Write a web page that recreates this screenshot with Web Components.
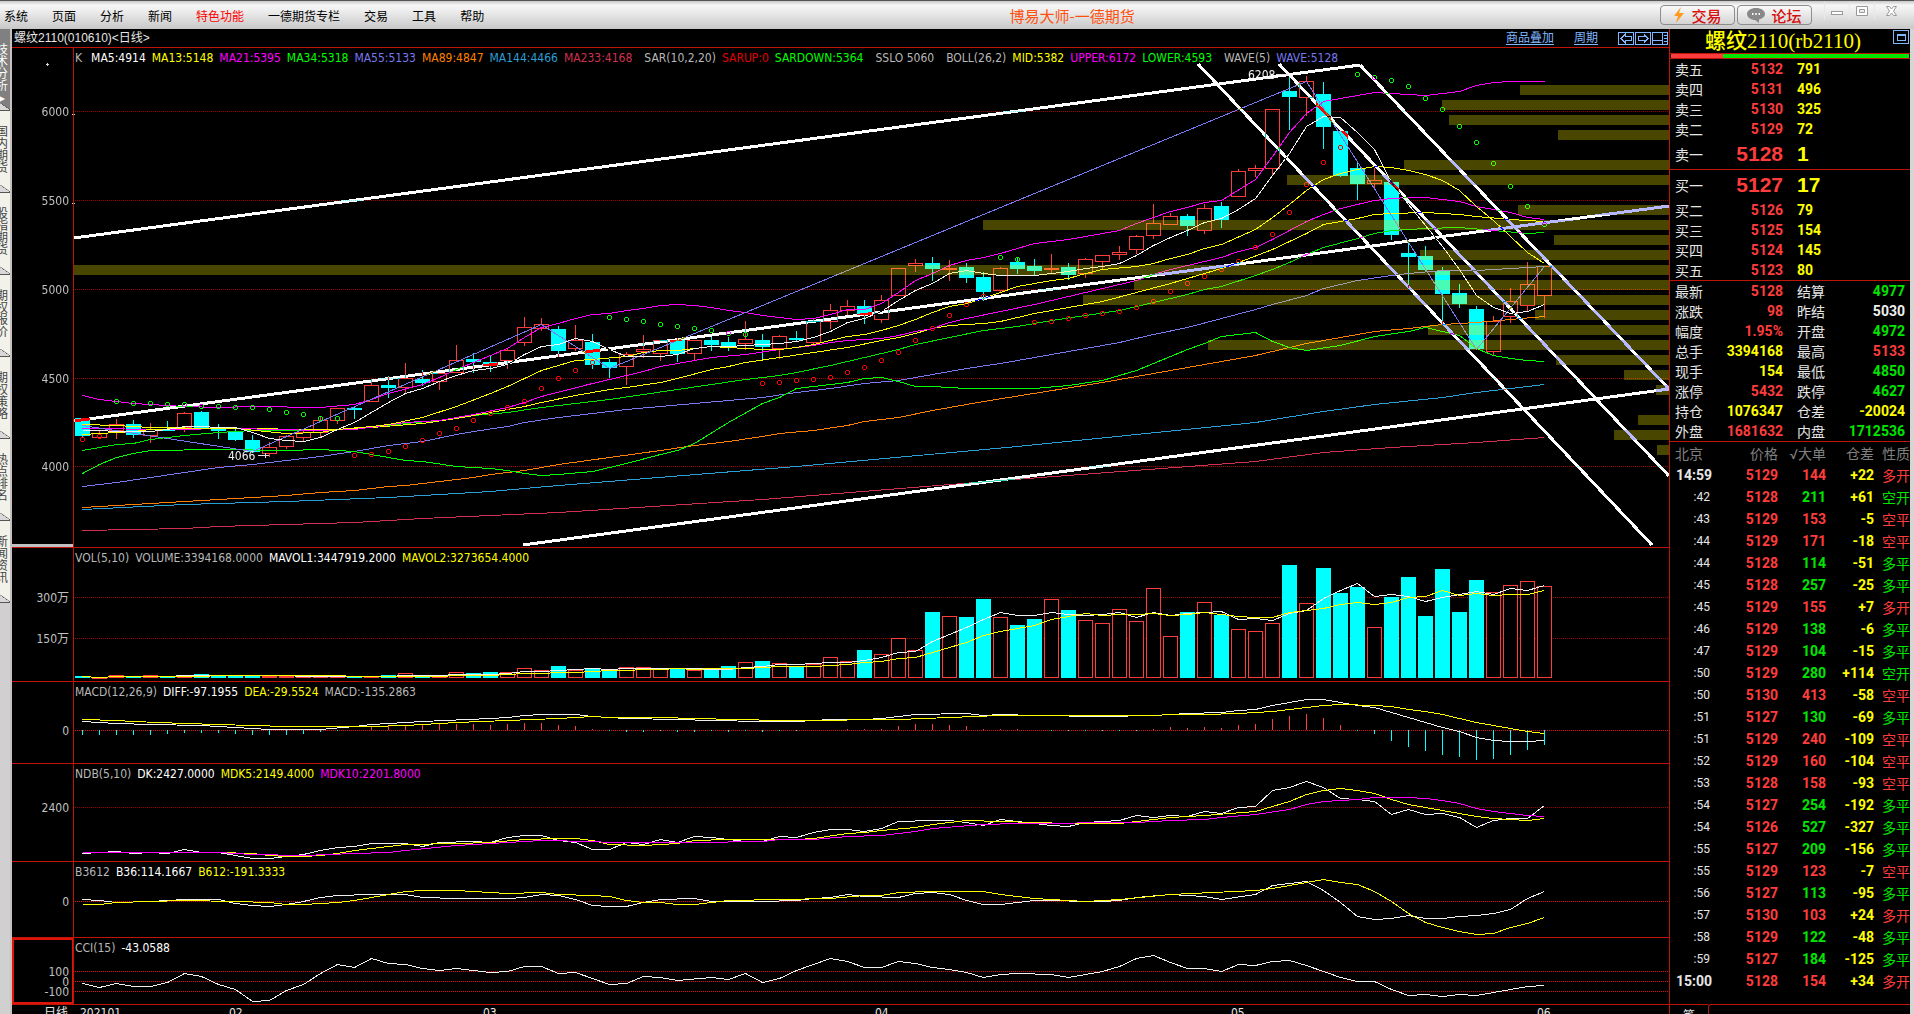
<!DOCTYPE html>
<html lang="zh-CN">
<head>
<meta charset="utf-8">
<title>博易大师-一德期货</title>
<style>
html,body{margin:0;height:100%;background:#000;overflow:hidden}
body{font-family:"Liberation Sans","Noto Sans CJK SC",sans-serif;font-size:12px;color:#e6e6e6;
--line:#c01408;--up:#ff3c3c;--down:#00e600;--qty:#ffff00;--link:#80b8ff}
</style>
</head>
<body>
<trade-app></trade-app>
<script>
const FIRST = 82.5, STEP = 17;
const xAt = i => FIRST + STEP * i;

/* day candles: direction, high, open/close top, open/close bottom, low */
const CANDLES = `d418,418,436,437 u430,433,437,437 u419,424,430,438 d420,424,435,437 u423,429,435,442 d421,429,430,430
u412,413,427,431 d411,412,428,428 d424,429,431,438 d428,431,440,440 d435,440,452,452 u442,447,453,456
u435,436,446,448 u430,432,437,441 u417,420,432,436 u408,408,420,423 d406,408,409,418 u379,385,401,401
d376,385,388,397 u363,378,387,393 d370,379,383,385 u373,373,381,389 u345,360,372,372 d353,359,362,372
d356,362,366,371 u348,350,360,368 u317,327,342,345 u318,324,328,330 d326,329,351,356 u325,340,348,350
d334,342,365,368 d359,362,368,377 u352,354,366,384 u335,349,351,357 u340,340,353,360 d338,340,354,361
u340,340,353,359 d337,340,345,350 d337,342,347,350 u321,339,343,349 d334,340,347,359 u335,336,348,358
d331,338,340,341 u319,321,342,344 u304,310,321,328 u300,306,310,314 d300,306,315,323 u295,300,319,322
u268,268,295,295 u259,263,265,271 d257,263,269,280 u260,268,269,280 d263,267,278,282 d272,277,292,300
u267,268,290,292 d258,262,269,273 d259,266,271,274 u254,268,269,273 d263,267,275,279 u258,259,273,277
u255,255,261,268 u246,252,254,259 u235,236,249,253 u204,223,235,238 u213,216,224,224 d214,216,226,235
u204,208,230,233 d202,206,220,227 u169,171,196,196 u165,168,170,176 u109,109,168,175 d77,91,97,129
u76,81,97,115 d82,94,127,148 d131,131,176,176 d161,168,184,199 u168,180,183,187 d182,182,235,239
d241,253,257,287 d246,256,270,270 d267,271,294,324 d284,293,304,307 d306,309,349,349 u316,321,351,355
u288,301,316,322 u262,284,305,310 u266,266,295,317`.split(/\s+/).map(s => ({up: s[0] === 'u', v: s.slice(1).split(',').map(Number)}));

const VOL_TOP = [676,677,675,676,675,676,675,674,675,675,675,676,676,676,676,676,676,676,675,673,676,676,672,673,672,672,668,670,666,670,668,669,667,667,669,669,670,669,666,662,661,663,667,664,657,661,650,654,638,650,612,616,617,599,617,625,619,599,610,620,623,609,621,588,636,612,602,615,629,631,623,565,603,568,593,587,627,597,577,616,569,612,580,592,585,581,586];
const MACD_END = [735,735,735,735,735,734,733,733,733,734,735,735,735,734,732,731,730,726,726,726,724,724,724,724,725,724,723,723,725,726,729,731,732,732,731,732,732,731,732,731,732,731,731,730,730,729,729,729,726,724,724,725,726,729,729,729,730,731,731,731,731,731,731,729,727,728,727,728,725,724,719,716,714,718,725,731,734,741,747,751,755,757,760,759,755,750,745];

const MAIN_LINES = [
['#d03050','0:530 6:528 8:526 12:524 16:522 20:518 24:515 28:512 40:499 54:480 69:461 73:452 77:447 82:442 86:437'],
['#2a9fd6','0:509 6:504 12:501 18:497 24:491 28:485 42:466 55:446 69:422 73:411 76:404 80:397 82:392 86:384'],
['#ff8000','0:507 4:503 8:499 12:495 14:492 16:490 18:486 19:485 21:481 23:477 24:474 26:470 28:464 34:450 36:445 38:441 40:436 41:433 43:430 45:425 46:421 48:417 50:410 51:407 53:401 60:382 69:355 72:343 74:337 76:331 78:328 80:324 82:322 84:319 86:316'],
['#7878f0','0:486 2:482 4:477 6:472 8:467 10:464 12:460 14:456 16:451 18:445 20:441 22:434 23:431 25:426 26:422 28:417 30:413 32:409 34:406 36:403 38:400 40:397 42:392 44:388 46:383 48:380 50:374 52:368 54:363 58:351 61:342 63:334 65:327 67:318 69:309 70:304 72:295 73:288 75:280 77:275 78:273 80:270 82:270 84:268 86:266'],
['#00e600','0:450 2:444 3:443 4:439 6:435 8:432 10:430 13:430 15:429 17:427 19:423 21:420 23:415 25:412 27:407 29:403 31:399 33:394 35:389 37:384 39:379 41:375 42:372 44:365 46:357 48:349 49:344 51:337 53:330 55:326 57:320 59:315 61:310 63:302 65:294 66:289 67:286 69:275 70:269 71:262 72:254 73:247 75:238 76:233 77:230 79:228 81:227 83:230 85:233 86:232'],
['#ffff00','0:424 2:425 4:427 8:428 15:429 17:427 20:423 22:418 24:412 26:406 27:402 29:395 31:389 32:387 34:382 35:378 37:369 38:366 39:362 41:357 43:352 45:347 47:340 48:337 49:333 50:328 51:325 53:323 54:321 56:313 58:307 60:301 62:292 64:283 66:273 67:268 68:262 70:249 71:241 72:233 73:224 75:218 76:214 77:213 79:212 81:214 82:216 84:219 86:221'],
['#ff00ff','0:428 5:429 9:428 14:430 16:429 19:422 21:420 23:414 25:407 26:402 27:396 30:383 32:375 33:371 34:366 36:360 37:357 39:354 41:349 43:345 44:342 45:340 47:338 48:335 49:331 50:328 51:322 52:318 54:311 56:304 57:300 60:288 62:280 63:274 64:269 65:265 66:261 67:257 68:251 69:247 70:239 71:230 72:221 73:214 74:208 75:204 76:200 77:198 78:197 79:197 81:201 82:206 84:212 85:217 86:219'],
['#ffff00','0:434 2:432 3:431 4:429 6:428 9:428 12:433 14:432 15:429 17:426 18:424 20:417 22:406 24:393 25:386 26:378 27:370 28:365 29:360 30:359 32:356 33:352 34:350 35:350 36:348 37:346 38:347 39:348 40:349 41:349 42:347 43:344 44:340 45:336 46:334 47:330 48:325 49:319 50:312 51:306 52:303 53:298 54:292 55:286 57:280 58:278 59:273 60:269 62:266 63:263 64:258 65:254 66:248 67:244 69:229 70:217 71:204 72:190 73:179 74:173 75:169 76:166 77:167 78:170 79:174 80:180 81:190 82:206 83:220 84:236 85:252 86:263'],
['#ff00ff','0:395 1:399 3:403 6:406 8:407 10:406 14:407 16:404 17:399 18:393 20:384 21:377 22:369 23:362 24:355 25:348 26:337 27:327 28:323 29:318 30:314 31:313 32:310 33:308 34:305 35:304 36:305 37:307 38:310 39:312 40:315 41:317 42:319 43:318 44:314 45:309 46:309 47:303 48:292 49:280 50:273 51:265 52:260 53:257 54:253 55:248 56:243 58:239 59:236 61:230 62:223 63:217 64:211 65:207 66:202 67:200 69:179 70:156 71:132 72:113 73:101 75:95 76:92 78:94 79:95 81:91 82:85 83:82 84:81 86:81'],
['#00ff00','0:473 1:464 2:457 3:453 4:450 8:449 12:450 14:449 16:451 17:454 18:457 19:460 20:461 22:466 24:468 25:470 26:473 27:475 28:474 30:471 32:463 34:454 35:450 36:443 38:422 40:403 41:397 42:388 43:386 44:384 45:382 46:378 47:377 48:381 49:386 50:386 52:388 56:388 58:385 60:380 62:370 64:356 65:349 66:343 67:336 69:332 70:341 71:347 72:350 74:345 76:336 78:331 79:327 81:335 82:348 83:355 84:358 85:360 86:361'],
['#7878f0','0:425 10:451 27:324 31:368 72:81 82:349 86:266'],
['#f0f0f0','0:430 1:430 2:431 4:431 5:429 6:426 7:426 8:427 9:427 10:432 11:438 12:440 13:441 14:437 15:429 16:422 17:412 18:402 19:393 20:388 21:381 22:375 23:370 24:368 25:364 26:354 27:346 28:344 29:338 30:341 31:349 32:356 34:356 35:354 36:348 37:346 38:346 39:345 40:344 41:343 42:341 43:337 44:331 45:322 46:318 47:311 48:300 49:290 50:283 51:273 52:270 53:273 54:275 56:275 57:273 58:271 59:268 60:266 61:263 62:255 63:245 64:237 65:230 66:222 67:218 68:209 69:198 70:175 71:153 72:126 73:116 74:117 75:132 76:149 77:182 78:204 79:225 80:246 81:269 82:295 83:307 84:313 85:311 86:304']];
const SAR_DOWN = '2:401 3:403 4:403 5:404 6:404 7:406 8:406 9:407 10:407 11:409 12:412 13:414 14:418 15:418 31:317 32:319 33:321 34:324 35:326 36:328 37:330 38:333 39:334 54:257 55:259 75:74 76:77 77:80 78:86 79:98 80:109 81:126 82:142 83:163 84:186 85:206 86:224';
const SAR_UP = '0:439 1:436 16:455 17:454 18:451 19:446 20:440 21:433 22:428 23:420 24:413 25:407 26:401 27:388 28:378 29:370 30:362 40:383 41:382 42:380 43:379 44:377 45:372 46:367 47:360 48:352 49:340 50:328 51:315 52:304 53:296 56:322 57:321 58:318 59:315 60:313 61:311 62:307 63:301 64:291 65:283 66:276 67:269 68:261 69:247 70:234 71:212 72:184 73:162 74:147';
/* turnover by price: row top, left end */
const PROFILE = [[85,1520],[100,1442],[115,1449],[130,1558],[160,1404],[175,1287],[205,1518],[220,983],[235,1554],[250,1420],[265,74],[280,1134],[295,1083],[310,1535],[325,1428],[340,1208],[355,1556],[370,1624],[385,1656],[415,1638],[430,1614],[445,1657]];
const TRENDS = [[74,238,1360,65],[74,421,1669,206],[523,545,1669,389],[1360,65,1669,389],[1279,64,1669,476],[1198,64,1652,545]];

const pairs = s => s.split(' ').map(p => p.split(':').map(Number));
const line = (color, s) => `<polyline fill="none" stroke="${color}" points="${pairs(s).map(([i, y]) => `${xAt(i)},${y + .5}`).join(' ')}"/>`;
const rings = (color, s) => pairs(s).map(([i, y]) => `<circle cx="${xAt(i)}" cy="${y + .5}" r="2" fill="none" stroke="${color}"/>`).join('');
const grid = (ys, color) => ys.map(y => `<path d="M75 ${y + .5}H1669" stroke="${color}" stroke-dasharray="1 1"/>`).join('');
const labels = rows => rows.map(([y, t]) => `<text x="69" y="${y + 5}" text-anchor="end">${t}</text>`).join('');

const PLOTS = {
  price() {
    const bars = CANDLES.map(({up, v: [h, t, b, l]}, i) => {
      const x = xAt(i);
      if (!up) return `<path d="M${x} ${h}V${l + 1}" stroke="#0ff"/><rect x="${x - 7.5}" y="${t}" width="15" height="${Math.max(2, b - t)}" fill="#0ff"/>`;
      return `<path d="M${x} ${h}V${t}M${x} ${b}V${l + 1}" stroke="#ff3c3c"/><rect x="${x - 7}" y="${t + .5}" width="14" height="${Math.max(1, b - t)}" fill="none" stroke="#ff3c3c"/>`;
    }).join('');
    return grid([111,200,289,378,466], '#a00000') + bars + MAIN_LINES.map(l => line(...l)).join('')
      + rings('#00ff00', SAR_DOWN) + rings('#ff0000', SAR_UP)
      + PROFILE.map(([y, x]) => `<rect x="${x}" y="${y}" width="${1669 - x}" height="10" fill="#fff600" fill-opacity=".286"/>`).join('')
      + `<g stroke="#fff" stroke-width="3" style="mix-blend-mode:difference">${TRENDS.map(([a, b, c, d]) => `<path d="M${a} ${b}L${c} ${d}"/>`).join('')}</g>`
      + labels([[111,'6000'],[200,'5500'],[289,'5000'],[378,'4500'],[466,'4000']])
      + `<path d="M12 545H74" stroke="#c0c0c0" stroke-width="3"/><path d="M46 64.500H49M47.500 63V66M72 114.500H75M72 203.500H75" stroke="#d0e0e0"/>`
      + `<g fill="#f0f0f0"><text x="1248" y="79">6208</text><text x="228" y="460">4066</text></g>`
      + `<path d="M1276 74.500H1288M258 455.500H269M265.500 453V458" stroke="#e0e0e0"/>`;
  },
  volume() {
    const base = 678, avg = n => VOL_TOP.map((_, i) => {
      const w = VOL_TOP.slice(Math.max(0, i - n + 1), i + 1);
      return `${i}:${Math.round(w.reduce((a, b) => a + b) / w.length)}`;
    }).join(' ');
    return grid([597,638], '#a00000') + VOL_TOP.map((t, i) => CANDLES[i].up
      ? `<rect x="${xAt(i) - 7}" y="${t + .5}" width="14" height="${Math.max(1, base - t - 1)}" fill="#000" stroke="#ff3c3c"/>`
      : `<rect x="${xAt(i) - 7.5}" y="${t}" width="15" height="${base - t}" fill="#0ff"/>`).join('')
      + line('#f0f0f0', avg(5)) + line('#ffff00', avg(10)) + labels([[597,'300万'],[638,'150万']]);
  },
  macd() {
    return grid([730], '#e01010') + MACD_END.map((e, i) => e === 730 ? '' : `<path d="M${xAt(i)} 730V${e}" stroke="${e < 730 ? '#ff3c3c' : '#0ff'}"/>`).join('')
      + line('#f0f0f0', '0:721 2:723 4:724 7:725 8:726 10:728 11:729 14:729 16:726 17:724 20:721 24:718 25:717 26:715 27:714 29:714 30:716 32:718 35:719 37:720 40:721 42:721 44:719 46:719 47:718 48:716 49:714 52:713 53:715 54:714 56:715 60:716 63:715 65:713 67:712 68:710 69:709 70:705 71:702 72:699 73:699 74:702 75:705 76:707 77:712 78:717 79:722 80:727 81:731 82:737 83:740 84:741 85:741 86:740')
      + line('#ffff00', '0:719 2:720 3:721 6:723 10:725 12:726 17:726 19:725 22:722 25:720 28:718 30:716 31:717 34:717 36:718 41:720 42:720 48:719 51:717 54:715 61:715 66:714 68:713 70:711 72:707 73:705 74:704 76:705 77:706 78:709 79:711 80:714 81:718 82:722 83:725 84:728 85:731 86:733')
      + labels([[730,'0']]);
  },
  ndb() {
    return grid([807], '#a00000')
      + line('#f0f0f0', '0:853 2:851 3:853 4:852 5:853 6:849 7:852 8:852 9:855 10:858 11:858 12:856 13:854 14:850 15:847 16:846 17:843 19:843 20:846 21:842 23:841 24:842 25:837 26:835 27:835 28:840 29:842 30:849 31:849 32:842 33:844 34:839 35:842 36:836 37:837 39:841 40:841 41:836 42:837 43:832 44:829 45:829 46:831 47:828 48:821 50:820 51:820 52:822 53:825 54:819 56:823 57:825 58:826 59:822 61:820 62:815 63:817 64:815 65:816 66:811 67:813 68:807 69:806 70:790 71:787 72:781 73:787 74:798 75:799 76:801 77:814 78:809 79:814 80:813 81:817 82:827 83:820 84:818 85:818 86:805')
      + line('#ffff00', '0:852 8:852 10:853 11:855 12:856 13:856 14:855 15:853 16:850 19:844 22:843 24:842 26:839 28:838 29:838 30:840 31:844 33:845 35:843 36:840 38:839 42:839 43:838 45:833 46:832 47:830 49:827 50:824 52:820 54:821 56:822 58:823 61:823 63:819 64:817 66:815 69:811 70:806 71:801 72:794 73:790 74:788 75:790 76:793 77:799 78:804 80:810 82:816 83:818 85:820 86:818')
      + line('#ff00ff', '0:852 8:852 10:854 13:855 16:853 18:852 19:850 22:845 25:842 27:840 30:841 31:842 36:842 40:841 41:839 43:839 45:836 47:835 49:831 50:828 53:824 55:823 62:822 64:820 66:819 67:817 69:814 71:809 72:804 73:801 75:799 76:797 78:797 79:798 80:800 81:803 82:808 83:811 85:815 86:816')
      + labels([[807,'2400']]);
  },
  b3612() {
    return grid([901], '#e01010')
      + line('#f0f0f0', '0:899 1:900 2:902 4:901 6:899 8:899 9:903 10:905 11:906 12:904 13:901 14:897 15:895 17:894 19:894 20:897 22:898 25:898 26:897 27:894 28:895 29:899 30:905 31:906 32:906 33:902 34:899 36:898 37:901 40:901 42:900 43:898 44:897 45:894 46:896 48:897 49:893 50:892 51:894 52:900 53:904 54:904 56:900 60:901 61:900 62:897 64:894 66:896 67:899 69:894 70:885 71:883 72:881 73:890 74:902 75:916 76:919 77:918 78:915 79:918 80:918 81:916 82:915 83:913 84:909 85:898 86:891')
      + line('#ffff00', '0:904 1:904 2:902 4:901 6:900 9:901 11:902 12:904 13:904 15:902 16:900 17:897 19:891 20:890 22:890 25:893 27:892 28:894 30:895 31:896 32:900 33:902 34:902 35:904 36:904 38:900 41:899 44:898 46:895 47:895 48:892 50:891 53:891 54:894 56:898 59:901 61:899 64:894 69:890 70:888 71:885 72:882 73:879 74:882 75:884 76:891 77:901 78:913 79:922 80:927 81:931 82:934 83:933 84:927 85:923 86:917')
      + labels([[901,'0']]);
  },
  cci() {
    return grid([971,981,991], '#e01010')
      + line('#f0f0f0', '0:983 1:987 2:983 3:986 4:986 5:982 6:973 7:976 8:984 9:989 10:1001 11:1000 12:990 13:984 14:973 15:964 16:967 17:958 18:963 19:964 20:968 21:970 22:968 24:972 25:971 26:966 27:966 28:973 29:972 30:978 31:984 32:983 33:976 34:977 35:980 37:977 38:979 39:973 40:982 41:978 42:970 43:964 44:958 45:961 46:967 47:967 48:961 49:963 50:967 51:969 52:972 53:977 54:974 55:973 57:974 58:977 60:971 61:966 62:958 63:955 64:962 65:968 66:968 67:971 68:964 69:965 70:961 71:960 72:965 73:971 74:977 75:981 76:981 77:989 78:995 79:994 80:996 81:994 82:995 83:992 84:989 85:986 86:985')
      + labels([[971,'100'],[981,'0'],[991,'-100']])
      + '<rect x="13" y="939" width="60" height="64" fill="none" stroke="#e01408" stroke-width="2"/>';
  },
  dates() {
    return '<g fill="#e6e6e6" font-size="12">' + [[44,'日线'],[80,'202101'],[229,'02'],[483,'03'],[875,'04'],[1231,'05'],[1537,'06']]
      .map(([x, t]) => `<text x="${x}" y="1017">${t}</text>`).join('') + '</g>';
  }
};

function define(name, html, init) {
  const tpl = document.createElement('template');
  tpl.innerHTML = html;
  customElements.define(name, class extends HTMLElement {
    connectedCallback() {
      if (this.shadowRoot) return;
      const root = this.attachShadow({mode: 'open'});
      root.append(tpl.content.cloneNode(true));
      if (init) init(this, root);
    }
  });
}

define('chart-pane', `<style>
:host{display:grid;grid-template:minmax(0,1fr)/minmax(0,1fr);min-height:0;box-sizing:border-box;border-top:1px solid var(--line);overflow:hidden}
svg{grid-area:1/1;display:block;width:100%;height:100%;isolation:isolate;shape-rendering:crispEdges;font:12px "DejaVu Sans Condensed","Noto Sans CJK SC",sans-serif;fill:#c0c0c0}
.legend{grid-area:1/1;align-self:start;z-index:1;display:flex;gap:6px;padding-left:63px;line-height:20px;white-space:nowrap;font-family:"DejaVu Sans Condensed","Noto Sans CJK SC",sans-serif;color:#b8b8b8}
</style><svg preserveAspectRatio="none"></svg><div class="legend"><slot></slot></div>`,
(host, root) => {
  const top = +host.getAttribute('top'), h = +host.getAttribute('span');
  host.style.flex = `${h - 1} 1 0px`;
  const svg = root.querySelector('svg');
  svg.setAttribute('viewBox', `12 ${top + 1} 1657 ${h - 1}`);
  svg.innerHTML = `<rect x="12" y="${top}" width="1657" height="${h}" fill="#000"/>` + PLOTS[host.getAttribute('plot')]()
    + (host.getAttribute('plot') === 'dates' ? '' : `<path d="M73.500 ${top}V${top + h}" stroke="#c01408"/>`);
});

define('menu-bar', `<style>
:host{display:flex;align-items:center;height:29px;box-sizing:border-box;border-top:1px solid #555;background:linear-gradient(#c8c8c8 0,#f6f6f6 4px,#f0f0f0 30%,#c8c8c8);color:#000}
nav{display:flex;gap:24px;padding-left:4px}
button{border:0;background:none;padding:0;margin:0;font:12px "Noto Sans CJK SC",sans-serif;color:inherit}
nav .hot{color:#f00}
h1{flex:1;text-align:center;margin:0;font:15px "Noto Sans CJK SC",sans-serif;color:#ff5010}
.right{display:flex;align-items:center}
.act{display:flex;align-items:center;justify-content:center;gap:6px;width:75px;height:20px;margin-right:2px;border:1px solid #8c8c8c;border-radius:4px;background:linear-gradient(#fafafa,#d4d4d4);color:#d81010;font-size:15px;font-weight:500}
.win{display:flex;align-items:center;justify-content:center;width:25px;height:18px;border-left:1px solid #e8e8e8}
.win.close{width:34px}
.wins{display:flex;padding:0 6px 8px 10px}
</style>
<nav><button>系统</button><button>页面</button><button>分析</button><button>新闻</button><button class="hot">特色功能</button><button>一德期货专栏</button><button>交易</button><button>工具</button><button>帮助</button></nav>
<h1>博易大师-一德期货</h1>
<div class="right">
<button class="act"><svg width="12" height="16" viewBox="0 0 12 16"><path d="M8 0L1 9H5L3 16L11 6H6Z" fill="#ff9a1e"/></svg>交易</button>
<button class="act"><svg width="18" height="15" viewBox="0 0 18 15"><path d="M9 0C4 0 0 2.600 0 6S4 12 8 12L12 15L12 11.500C16 10.500 18 8.500 18 6C18 2.600 14 0 9 0Z" fill="#888"/><path d="M5 6H6.500M8.300 6H9.800M11.600 6H13" stroke="#fff" stroke-width="2"/></svg>论坛</button>
<div class="wins">
<button class="win" aria-label="最小化"><svg width="14" height="14"><rect x="1.500" y="7.500" width="11" height="3" fill="#fff" stroke="#999"/></svg></button>
<button class="win" aria-label="最大化"><svg width="14" height="14"><path d="M1.500 2.500H12.500V11.500H1.500ZM4.500 5.500H9.500V8.500H4.500Z" fill="#fff" fill-rule="evenodd" stroke="#999"/></svg></button>
<button class="win close" aria-label="关闭"><svg width="14" height="14"><path d="M1.500 2.500H4.500L6.500 5L8.500 2.500H11.500L8.500 7L11.500 11.500H8.500L6.500 9L4.500 11.500H1.500L4.500 7Z" fill="#fff" stroke="#999"/></svg></button>
</div></div>`);

define('side-tabs', `<style>
:host{display:flex;flex-direction:column;width:12px;overflow:hidden;background:#d0d0d0;border-right:2px solid #c8c0c0;box-sizing:border-box}
button{position:relative;flex:none;width:100%;height:82px;padding:0;border:0;background:#f2f2ea;color:#444;display:flex;justify-content:flex-end;align-items:flex-start;font:12px "Noto Sans CJK SC",sans-serif}
button:first-child{height:80px}
span{width:12px;margin:14px 2px 0 0;line-height:12px;white-space:normal;word-break:break-all;text-align:center}
button::after{content:"";position:absolute;left:0;right:0;bottom:0;height:7px;border-bottom:1px solid #555;background:linear-gradient(35deg,#d8d8d8 48%,#555 50%,transparent 58%)}
button.on{background:#808080;color:#fff}
</style><button class="on"><span>技术分析▸</span></button><button><span>国内期货</span></button><button><span>股指期货</span></button><button><span>期权报价</span></button><button><span>期权策略</span></button><button><span>热点排名</span></button><button><span>新闻资讯</span></button>`);

define('chart-title', `<style>
:host{display:flex;align-items:center;height:18px;padding-left:2px;background:#000;color:#e6e6e6;line-height:18px}
span{flex:1}a{color:var(--link);margin-right:20px;text-decoration:underline;text-underline-offset:2px}svg{display:block;flex:none}
</style><span>螺纹2110(010610)&lt;日线&gt;</span><a href="#overlay">商品叠加</a><a href="#period">周期</a>
<svg width="51" height="16" viewBox="0 0 51 16" fill="none" stroke="#80b8ff" shape-rendering="crispEdges"><path d="M.500 2.500H15.500V14.500H.500ZM17.500 2.500H32.500V14.500H17.500ZM34.500 2.500H49.500V14.500H34.500Z"/><path d="M3 8.500L7 4.500V6.500H13V10.500H7V12.500ZM30 8.500L26 4.500V6.500H20V10.500H26V12.500ZM35 10.500H44M44.500 3V14"/><path d="M46 5.500H49M46 8.500H49M46 11.500H49"/></svg>`);

const SELL = [['卖五',5132,791],['卖四',5131,496],['卖三',5130,325],['卖二',5129,72],['卖一',5128,1]];
const BUY = [['买一',5127,17],['买二',5126,79],['买三',5125,154],['买四',5124,145],['买五',5123,80]];
define('order-book', `<style>
:host{display:block;border-bottom:1px solid var(--line)}
table{border-collapse:collapse;table-layout:fixed;width:100%}
td,th{padding:0;height:20px;line-height:20px;font:bold 14px Roboto,"Noto Sans CJK SC",sans-serif;text-align:left}
th{font-weight:normal;padding-left:5px;color:#e6e6e6}
.p{color:var(--up);text-align:right}.q{color:var(--qty);padding-left:14px}
.best td{font:bold 21px "Liberation Sans",sans-serif}.best td,.best th{height:30px}
</style><table><colgroup><col style="width:60px"><col style="width:53px"><col></colgroup><tbody></tbody></table>`,
(host, root) => {
  root.querySelector('tbody').innerHTML = (host.getAttribute('side') === 'sell' ? SELL : BUY)
    .map(([l, p, q]) => `<tr${l[1] === '一' ? ' class="best"' : ''}><th scope="row">${l}</th><td class="p">${p}</td><td class="q">${q}</td></tr>`).join('');
});

const STATS = [['最新','5128','r','结算','4977','g'],['涨跌','98','r','昨结','5030','w'],['幅度','1.95%','r','开盘','4972','g'],['总手','3394168','y','最高','5133','r'],['现手','154','y','最低','4850','g'],['涨停','5432','r','跌停','4627','g'],['持仓','1076347','y','仓差','-20024','y'],['外盘','1681632','r','内盘','1712536','g']];
define('quote-stats', `<style>
:host{display:block;border-bottom:1px solid var(--line)}
table{border-collapse:collapse;table-layout:fixed;width:100%}
td,th{padding:0;height:20px;font:bold 14px Roboto,"Noto Sans CJK SC",sans-serif;text-align:right;white-space:nowrap}
th{font-weight:normal;text-align:left;color:#e6e6e6}th:first-child{padding-left:5px}th+td+th{padding-left:14px}td:last-child{padding-right:5px}
.r{color:var(--up)}.g{color:var(--down)}.y{color:var(--qty)}.w{color:#f0f0f0}
</style><table><colgroup><col style="width:40px"><col style="width:73px"><col style="width:48px"><col></colgroup><tbody></tbody></table>`,
(host, root) => {
  root.querySelector('tbody').innerHTML = STATS.map(([a, b, c, d, e, f]) => `<tr><th scope="row">${a}</th><td class="${c}">${b}</td><th scope="row">${d}</th><td class="${f}">${e}</td></tr>`).join('');
});

const TICKS = `14:59 5129 144 +22 多开|:42 5128 211 +61 空开|:43 5129 153 -5 空平|:44 5129 171 -18 空平|:44 5128 114 -51 多平|:45 5128 257 -25 多平|:45 5129 155 +7 多开|:46 5129 138 -6 多平|:47 5129 104 -15 多平|:50 5129 280 +114 空开|:50 5130 413 -58 空平|:51 5127 130 -69 多平|:51 5129 240 -109 空平|:52 5129 160 -104 空平|:53 5128 158 -93 空平|:54 5127 254 -192 多平|:54 5126 527 -327 多平|:55 5127 209 -156 多平|:55 5129 123 -7 空平|:56 5127 113 -95 多平|:57 5130 103 +24 多开|:58 5129 122 -48 多平|:59 5127 184 -125 多平|15:00 5128 154 +34 多开`.split('|').map(r => r.split(' '));
define('tick-list', `<style>
:host{display:block;flex:1;min-height:0;overflow:hidden}
table{border-collapse:collapse;table-layout:fixed;width:100%}
td,th{padding:0;height:22px;font:bold 14px Roboto,"Noto Sans CJK SC",sans-serif;text-align:right;white-space:nowrap}
th{font-weight:normal;color:#808080}th:first-child{text-align:left;padding-left:5px}
.t{color:#e6e6e6}.s{font-weight:normal;font-size:12px;padding-right:2px}
.r{color:var(--up)}.g{color:var(--down)}.y{color:var(--qty)}td:last-child{font-weight:normal}
</style><table><colgroup><col style="width:42px"><col style="width:66px"><col style="width:48px"><col style="width:48px"><col></colgroup>
<thead><tr><th>北京</th><th>价格</th><th>√大单</th><th>仓差</th><th>性质</th></tr></thead><tbody></tbody></table>`,
(host, root) => {
  root.querySelector('tbody').innerHTML = TICKS.map(([t, p, q, d, k]) => {
    const c = k === '多开' || k === '空平' ? 'r' : 'g';
    return `<tr><td class="t${t[0] === ':' ? ' s' : ''}">${t}</td><td class="r">${p}</td><td class="${c}">${q}</td><td class="y">${d}</td><td class="${c}">${k}</td></tr>`;
  }).join('');
});

define('quote-panel', `<style>
:host{display:flex;flex-direction:column;width:241px;box-sizing:border-box;border-left:1px solid var(--line);background:#000;min-height:0}
header{display:flex;height:24px;align-items:center;border-bottom:1px solid var(--line);position:relative;justify-content:center;padding-right:14px}
h2{margin:0;font:21px/24px "Liberation Serif","Noto Sans CJK SC",serif;color:#ff0;font-weight:500}
header button{position:absolute;right:1px;top:1px;width:16px;height:14px;padding:0;border:1px solid var(--link);background:none;display:flex;align-items:center;justify-content:center}
header i{width:9px;height:7px;box-sizing:border-box;border:1px solid var(--link);border-top-width:2px}
.ratio{display:flex;height:4px;padding:0 1px;border-bottom:1px solid var(--line)}.ratio i:first-child{flex:42;background:#ff3c3c}.ratio i{flex:152;background:#00e600}
footer{display:flex;height:10px;overflow:hidden}
footer button{width:38px;padding:0;margin:0;border:0;border-top:1px solid var(--line);background:#000;color:#e6e6e6;font:12px/18px "Noto Sans CJK SC",sans-serif;height:20px;overflow:hidden}
footer div{flex:1;height:20px;border:1px solid var(--line);border-right:0;border-radius:3px 0 0 0}
</style><header><h2>螺纹2110(rb2110)</h2><button aria-label="窗口"><i></i></button></header>
<div class="ratio"><i></i><i></i></div>
<order-book side="sell"></order-book><order-book side="buy"></order-book><quote-stats></quote-stats><tick-list></tick-list>
<footer><button>笔</button><div></div></footer>`);

define('trade-app', `<style>
:host{display:flex;flex-direction:column;height:100vh;overflow:hidden}
main{flex:1;display:flex;min-height:0;border-right:4px solid #d8d4d4}
section{flex:1;min-width:0;display:flex;flex-direction:column}
.w{color:#fff}.y{color:#ff0}.m{color:#f0f}.g{color:#0f0}.b{color:#7878f0}.o{color:#ff8000}.c{color:#2a9fd6}.k{color:#d03050}.r{color:#e00000}
.n{margin-left:6px}.e{margin-right:3px}
</style><menu-bar></menu-bar><main><side-tabs></side-tabs><section><chart-title></chart-title>
<chart-pane plot="price" top="47" span="500"><span class="e">K</span><span class="w">MA5:4914</span><span class="y">MA13:5148</span><span class="m">MA21:5395</span><span class="g">MA34:5318</span><span class="b">MA55:5133</span><span class="o">MA89:4847</span><span class="c">MA144:4466</span><span class="k">MA233:4168</span><span class="n">SAR(10,2,20)</span><span class="r">SARUP:0</span><span class="g">SARDOWN:5364</span><span class="n">SSLO 5060</span><span class="n">BOLL(26,2)</span><span class="y">MID:5382</span><span class="m">UPPER:6172</span><span class="g">LOWER:4593</span><span class="n">WAVE(5)</span><span class="b">WAVE:5128</span></chart-pane>
<chart-pane plot="volume" top="547" span="134"><span>VOL(5,10)</span><span>VOLUME:3394168.0000</span><span class="w">MAVOL1:3447919.2000</span><span class="y">MAVOL2:3273654.4000</span></chart-pane>
<chart-pane plot="macd" top="681" span="82"><span>MACD(12,26,9)</span><span class="w">DIFF:-97.1955</span><span class="y">DEA:-29.5524</span><span>MACD:-135.2863</span></chart-pane>
<chart-pane plot="ndb" top="763" span="98"><span>NDB(5,10)</span><span class="w">DK:2427.0000</span><span class="y">MDK5:2149.4000</span><span class="m">MDK10:2201.8000</span></chart-pane>
<chart-pane plot="b3612" top="861" span="76"><span>B3612</span><span class="w">B36:114.1667</span><span class="y">B612:-191.3333</span></chart-pane>
<chart-pane plot="cci" top="937" span="67"><span>CCI(15)</span><span class="w">-43.0588</span></chart-pane>
<chart-pane plot="dates" top="1004" span="10"></chart-pane>
</section><quote-panel></quote-panel></main>`);
</script>
</body>
</html>
